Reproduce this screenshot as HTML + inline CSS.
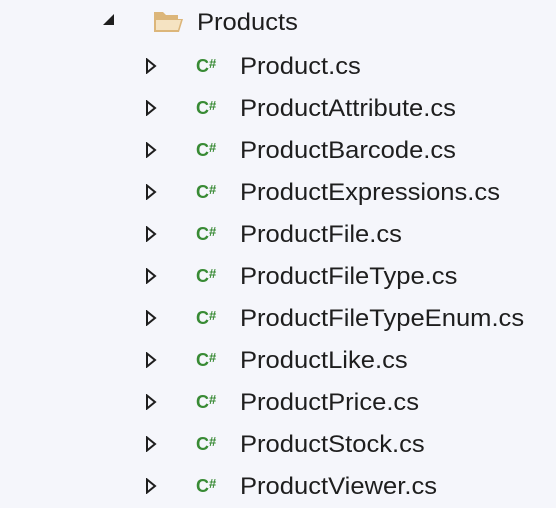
<!DOCTYPE html>
<html><head><style>
body{margin:0;width:556px;height:505px;background:#f5f6fb;font-family:"Liberation Sans",sans-serif;color:#1e1e1e;position:relative;overflow:hidden}
.r{position:absolute;left:0;height:42px;width:556px}
.t{position:absolute;left:240px;top:2px;font-size:24px;line-height:42px;white-space:nowrap;transform:scaleX(1.065);transform-origin:0 0}
.cs{position:absolute;left:196px;top:11px;font-size:18px;font-weight:bold;color:#388a34;line-height:18px;letter-spacing:0px}
.cs sup{font-size:13px;vertical-align:4px}
.tri{position:absolute;left:145px;top:14px}
</style></head><body>
<svg style="position:absolute;left:102px;top:13px" width="14" height="14"><polygon points="12,1 12,12 1,12" fill="#1e1e1e"/></svg>
<svg style="position:absolute;left:152px;top:8px" width="34" height="26" viewBox="0 0 34 26"><path d="M2,4 h9 l3,3 h12 v4 h5 l-4,13 h-25 z" fill="#dcb67a"/><path d="M4,12 h25 l-3,10 h-22z" fill="#f5e3c2"/></svg>
<div style="position:absolute;left:197px;top:1px;font-size:24px;line-height:44px;transform:scaleX(1.065);transform-origin:0 0">Products</div>
<div class="r" style="top:44px"><svg class="tri" width="12" height="16"><polygon points="2,1.5 10,8 2,14.5" fill="none" stroke="#1e1e1e" stroke-width="2"/></svg><span class="cs">C<sup>#</sup></span><span class="t">Product.cs</span></div>
<div class="r" style="top:86px"><svg class="tri" width="12" height="16"><polygon points="2,1.5 10,8 2,14.5" fill="none" stroke="#1e1e1e" stroke-width="2"/></svg><span class="cs">C<sup>#</sup></span><span class="t">ProductAttribute.cs</span></div>
<div class="r" style="top:128px"><svg class="tri" width="12" height="16"><polygon points="2,1.5 10,8 2,14.5" fill="none" stroke="#1e1e1e" stroke-width="2"/></svg><span class="cs">C<sup>#</sup></span><span class="t">ProductBarcode.cs</span></div>
<div class="r" style="top:170px"><svg class="tri" width="12" height="16"><polygon points="2,1.5 10,8 2,14.5" fill="none" stroke="#1e1e1e" stroke-width="2"/></svg><span class="cs">C<sup>#</sup></span><span class="t">ProductExpressions.cs</span></div>
<div class="r" style="top:212px"><svg class="tri" width="12" height="16"><polygon points="2,1.5 10,8 2,14.5" fill="none" stroke="#1e1e1e" stroke-width="2"/></svg><span class="cs">C<sup>#</sup></span><span class="t">ProductFile.cs</span></div>
<div class="r" style="top:254px"><svg class="tri" width="12" height="16"><polygon points="2,1.5 10,8 2,14.5" fill="none" stroke="#1e1e1e" stroke-width="2"/></svg><span class="cs">C<sup>#</sup></span><span class="t">ProductFileType.cs</span></div>
<div class="r" style="top:296px"><svg class="tri" width="12" height="16"><polygon points="2,1.5 10,8 2,14.5" fill="none" stroke="#1e1e1e" stroke-width="2"/></svg><span class="cs">C<sup>#</sup></span><span class="t">ProductFileTypeEnum.cs</span></div>
<div class="r" style="top:338px"><svg class="tri" width="12" height="16"><polygon points="2,1.5 10,8 2,14.5" fill="none" stroke="#1e1e1e" stroke-width="2"/></svg><span class="cs">C<sup>#</sup></span><span class="t">ProductLike.cs</span></div>
<div class="r" style="top:380px"><svg class="tri" width="12" height="16"><polygon points="2,1.5 10,8 2,14.5" fill="none" stroke="#1e1e1e" stroke-width="2"/></svg><span class="cs">C<sup>#</sup></span><span class="t">ProductPrice.cs</span></div>
<div class="r" style="top:422px"><svg class="tri" width="12" height="16"><polygon points="2,1.5 10,8 2,14.5" fill="none" stroke="#1e1e1e" stroke-width="2"/></svg><span class="cs">C<sup>#</sup></span><span class="t">ProductStock.cs</span></div>
<div class="r" style="top:464px"><svg class="tri" width="12" height="16"><polygon points="2,1.5 10,8 2,14.5" fill="none" stroke="#1e1e1e" stroke-width="2"/></svg><span class="cs">C<sup>#</sup></span><span class="t">ProductViewer.cs</span></div>
</body></html>
